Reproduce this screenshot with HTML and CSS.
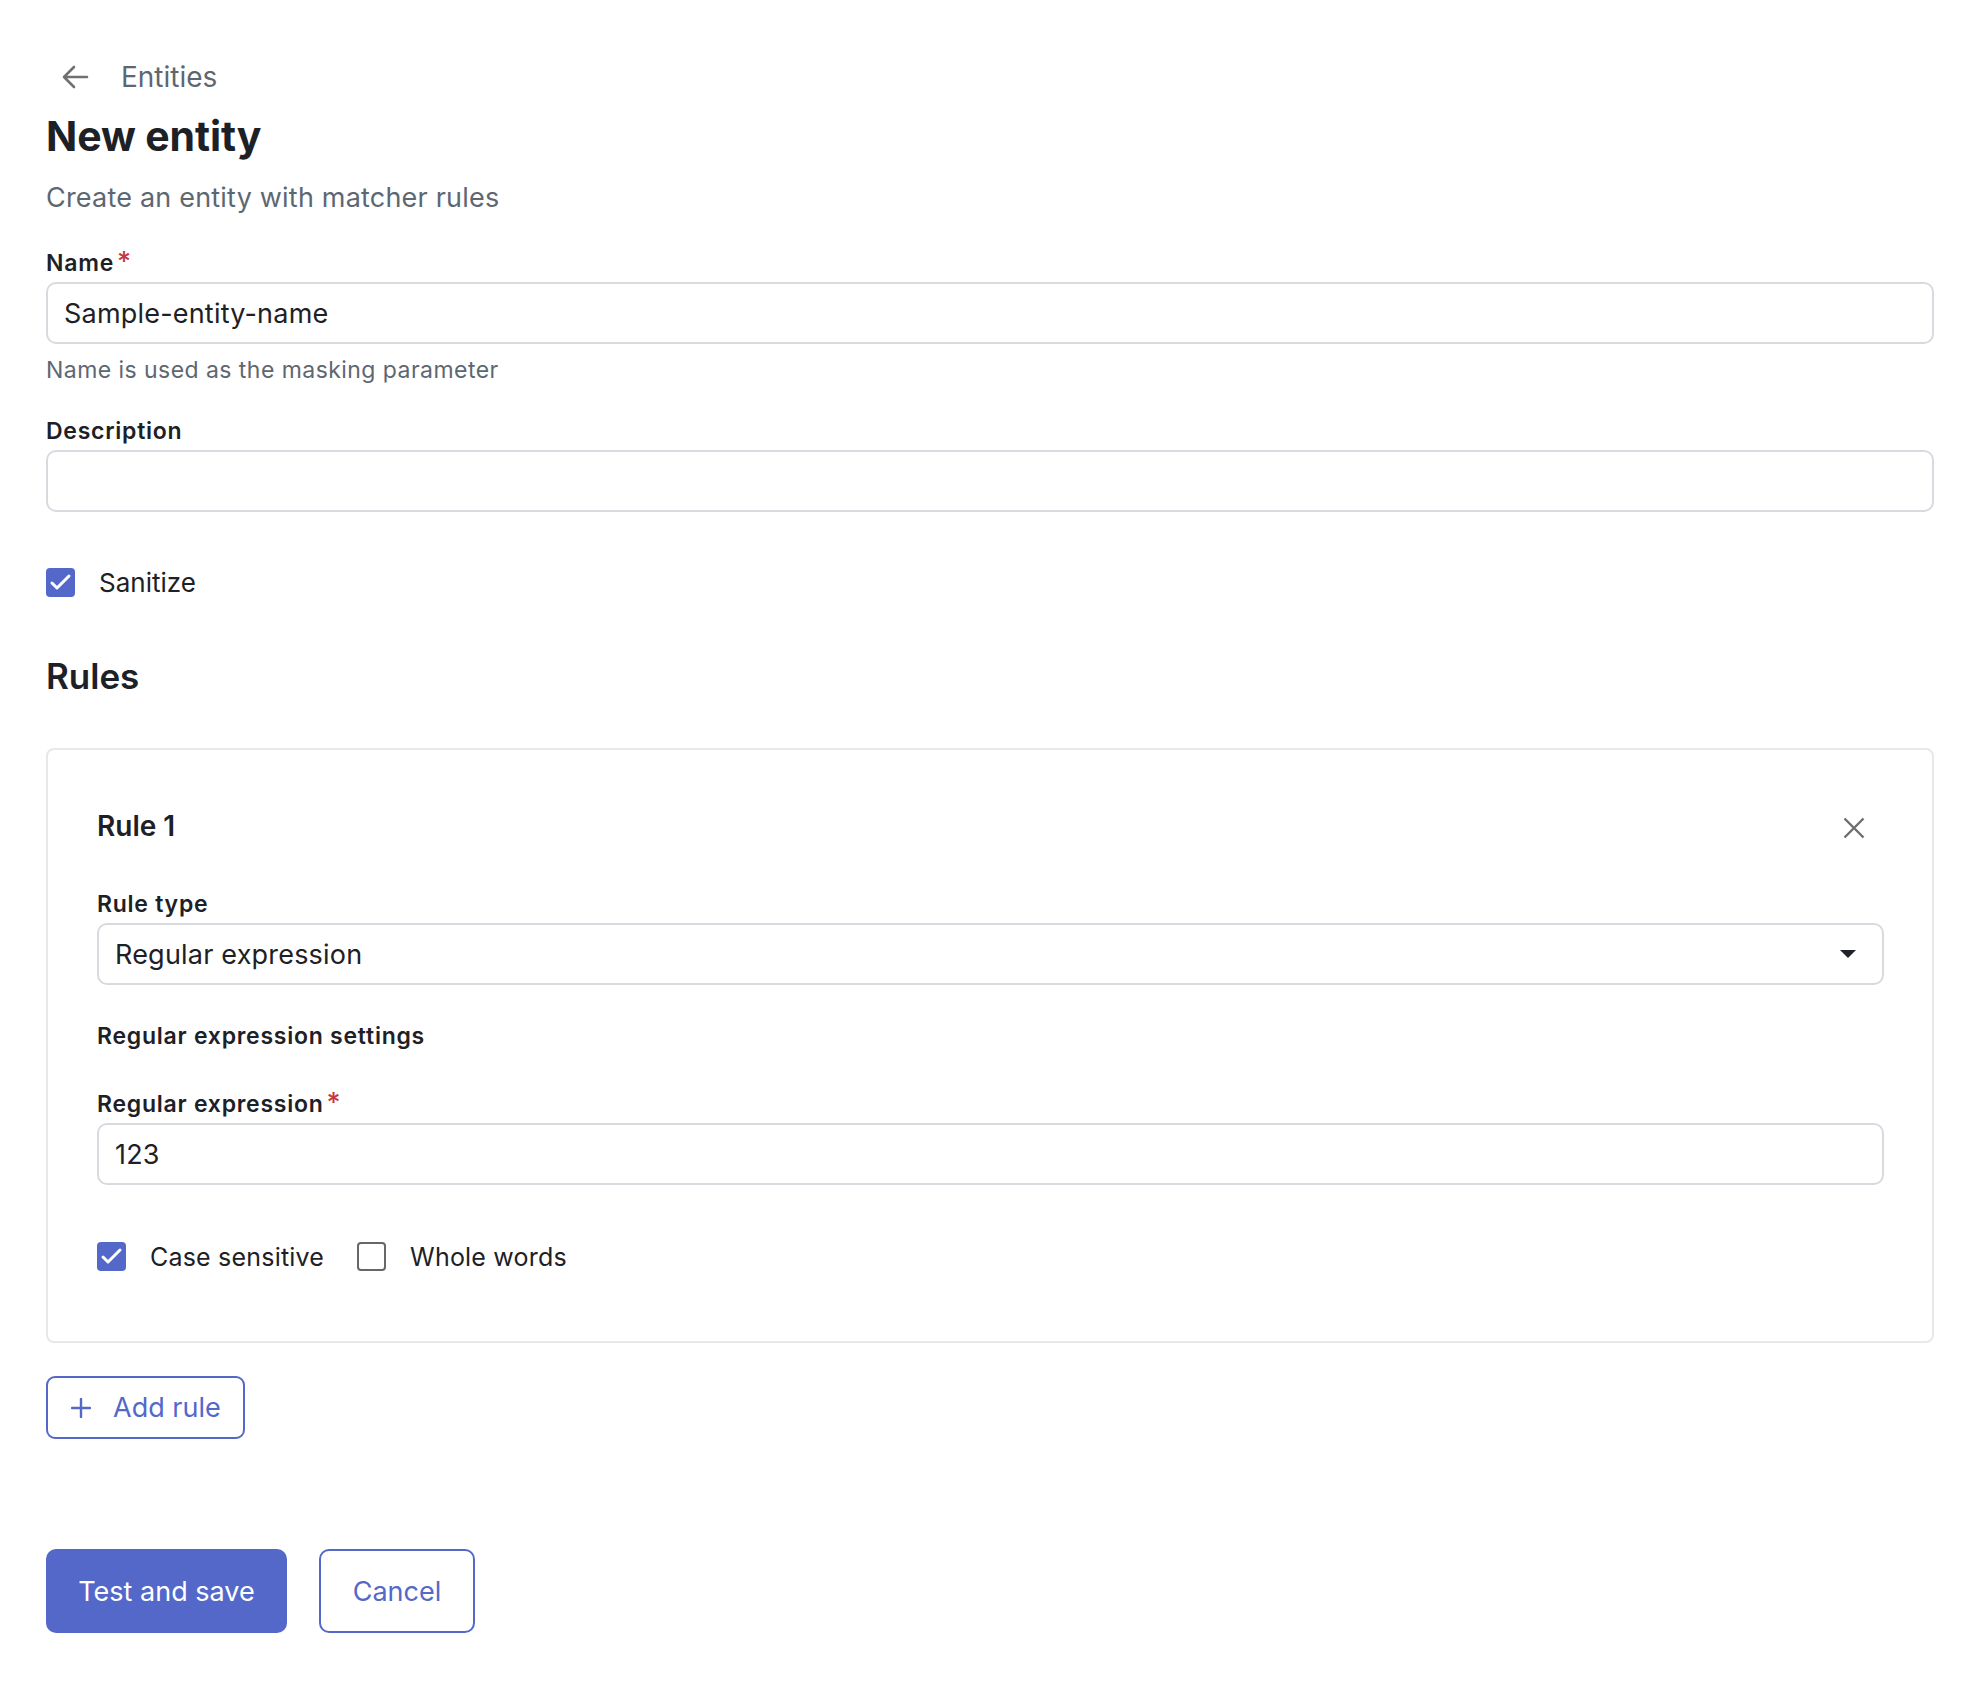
FILE: index.html
```html
<!doctype html>
<html>
  <head>
    <link rel="stylesheet" href="styles.css">
  </head>
  <body>
    <div class="page">
      <a class="back" href="#">
        <svg class="back-icon" width="28" height="24" viewBox="0 0 28 24">
          <path d="M26 12H3M13 2L3 12l10 10" fill="none" stroke="#707070" stroke-width="2.6" stroke-linecap="round" stroke-linejoin="round"/>
        </svg>
        <span>Entities</span>
      </a>

      <h1 class="title">New entity</h1>
      <p class="subtitle">Create an entity with matcher rules</p>

      <label class="label first">Name<span class="req">*</span></label>
      <input class="input" type="text" value="Sample-entity-name">
      <p class="helper">Name is used as the masking parameter</p>

      <label class="label desc">Description</label>
      <input class="input" type="text" value="">

      <div class="check-row sanitize">
        <span class="box checked">
          <svg width="29" height="29" viewBox="0 0 29 29"><path d="M6 15l5 5 12-12" fill="none" stroke="#fff" stroke-width="3" stroke-linecap="round" stroke-linejoin="round"/></svg>
        </span>
        <span class="check-text">Sanitize</span>
      </div>

      <h2 class="section">Rules</h2>

      <div class="card">
        <div class="card-head">
          <span class="card-title">Rule 1</span>
          <svg class="close" width="22" height="22" viewBox="0 0 22 22">
            <path d="M1.5 1.5l19 19M20.5 1.5l-19 19" stroke="#6e6e6e" stroke-width="2.4"/>
          </svg>
        </div>

        <label class="label rule-type">Rule type</label>
        <div class="input select">
          <span>Regular expression</span>
          <svg width="18" height="10" viewBox="0 0 18 10"><path d="M1 1h16L9 9z" fill="#1f2328"/></svg>
        </div>

        <div class="label settings">Regular expression settings</div>

        <label class="label regex">Regular expression<span class="req">*</span></label>
        <input class="input" type="text" value="123">

        <div class="check-row options">
          <span class="box checked">
            <svg width="29" height="29" viewBox="0 0 29 29"><path d="M6 15l5 5 12-12" fill="none" stroke="#fff" stroke-width="3" stroke-linecap="round" stroke-linejoin="round"/></svg>
          </span>
          <span class="check-text">Case sensitive</span>
          <span class="box"></span>
          <span class="check-text">Whole words</span>
        </div>
      </div>

      <button class="btn btn-outline add">
        <svg width="20" height="20" viewBox="0 0 20 20"><path d="M10 1v18M1 10h18" stroke="#5368c9" stroke-width="2.4" stroke-linecap="round"/></svg>
        <span>Add rule</span>
      </button>

      <div class="actions">
        <button class="btn btn-primary">Test and save</button>
        <button class="btn btn-outline cancel">Cancel</button>
      </div>
    </div>
  </body>
</html>
```

FILE: styles.css
```css
body {
  margin: 0;
  font-family: Inter, "Noto Sans", sans-serif;
  color: #1d2126;
  background: #fff;
}

.page {
  padding: 59px 40px 60px 46px;
}

.back {
  display: flex;
  align-items: center;
  gap: 32px;
  height: 36px;
  padding-left: 15px;
  font-size: 28px;
  color: #5d6772;
  text-decoration: none;
}

.title {
  margin: 17px 0 0;
  font-size: 41px;
  line-height: 48px;
  font-weight: 700;
  letter-spacing: -0.1px;
}

.subtitle {
  margin: 20px 0 0;
  font-size: 27px;
  line-height: 36px;
  letter-spacing: 0.2px;
  color: #5d6772;
}

.label {
  display: block;
  font-size: 23px;
  line-height: 28px;
  font-weight: 600;
  letter-spacing: 0.75px;
  margin-bottom: 5px;
}

.label.first { margin-top: 33px; }
.label.desc { margin-top: 33px; }

.req {
  color: #c7373b;
  font-size: 27px;
  font-weight: 500;
  margin-left: 3px;
  letter-spacing: 0;
  line-height: 0;
}

.input {
  display: block;
  box-sizing: border-box;
  width: 100%;
  height: 62px;
  margin: 0;
  padding: 0 16px;
  border: 2px solid #d7dbe0;
  border-radius: 10px;
  font-family: inherit;
  font-size: 27px;
  letter-spacing: 0.2px;
  color: #1d2126;
  background: #fff;
  outline: none;
}

.helper {
  margin: 12px 0 0;
  font-size: 23px;
  line-height: 28px;
  letter-spacing: 0.45px;
  color: #5d6772;
}

.check-row {
  display: flex;
  align-items: center;
  height: 29px;
}

.check-row.sanitize { margin-top: 56px; }

.box {
  box-sizing: border-box;
  width: 29px;
  height: 29px;
  border: 2.5px solid #676767;
  border-radius: 4px;
  display: flex;
  align-items: center;
  justify-content: center;
}

.box.checked {
  background: #5468c9;
  border: none;
}

.check-text {
  margin-left: 24px;
  font-size: 25px;
  letter-spacing: 0.2px;
  color: #1d2126;
}

.sanitize .check-text {
  font-size: 26px;
  letter-spacing: 0;
}

.options .check-text + .box { margin-left: 33px; }

.section {
  margin: 57px 0 0;
  font-size: 35px;
  line-height: 44px;
  font-weight: 600;
}

.card {
  margin-top: 50px;
  border: 2px solid #e7e8ea;
  border-radius: 8px;
  padding: 58px 48px 70px 49px;
}

.card-head {
  display: flex;
  align-items: center;
  justify-content: space-between;
  height: 36px;
}

.card-title {
  font-size: 28px;
  font-weight: 600;
}

.close { margin: 4px 19px 0 0; }

.label.rule-type { margin-top: 46px; }

.select {
  display: flex;
  align-items: center;
  justify-content: space-between;
  padding-right: 25px;
}

.label.settings { margin-top: 37px; margin-bottom: 0; }
.label.regex { margin-top: 40px; }

.check-row.options { margin-top: 57px; }

.btn {
  font-family: inherit;
  font-size: 27px;
  border-radius: 9px;
  cursor: pointer;
  box-sizing: border-box;
}

.btn-outline {
  background: #fff;
  border: 2px solid #5468c9;
  color: #5468c9;
}

.add {
  display: flex;
  align-items: center;
  gap: 22px;
  margin-top: 33px;
  height: 63px;
  width: 199px;
  padding: 0 0 0 23px;
}

.actions {
  display: flex;
  gap: 32px;
  margin-top: 110px;
}

.btn-primary {
  height: 84px;
  width: 241px;
  border: none;
  background: #5468c9;
  color: #fff;
  border-radius: 10px;
}

.cancel {
  height: 84px;
  width: 156px;
  border-radius: 10px;
}
```
